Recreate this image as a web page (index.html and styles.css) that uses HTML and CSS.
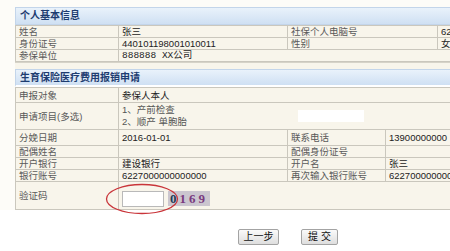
FILE: index.html
```html
<!DOCTYPE html>
<html lang="zh-CN">
  <head>
    <meta charset="UTF-8" />
    <title>生育保险医疗费用报销申请</title>
    <link rel="stylesheet" href="styles.css">
  </head>
  <body>
    <div class="page">
      <div class="form-box">
        <div class="caption">个人基本信息</div>
        <table class="grid">
          <colgroup>
            <col style="width: 103px" />
            <col style="width: 169px" />
            <col style="width: 150px" />
            <col />
          </colgroup>
          <tr>
            <td class="label">姓名</td>
            <td>张三</td>
            <td class="label">社保个人电脑号</td>
            <td>6200000000</td>
          </tr>
          <tr>
            <td class="label">身份证号</td>
            <td>440101198001010011</td>
            <td class="label">性别</td>
            <td>女</td>
          </tr>
          <tr>
            <td class="label">参保单位</td>
            <td colspan="3" class="mono">888888 XX公司</td>
          </tr>
        </table>

        <div class="gap"></div>

        <div class="caption caption-second">生育保险医疗费用报销申请</div>
        <table class="grid">
          <colgroup>
            <col style="width: 103px" />
            <col style="width: 169px" />
            <col style="width: 98px" />
            <col />
          </colgroup>
          <tr class="row-first">
            <td class="label">申报对象</td>
            <td colspan="3">参保人本人</td>
          </tr>
          <tr class="row-items">
            <td class="label">申请项目(多选)</td>
            <td colspan="3">
              <div class="items">
                <div class="item-list">
                  <div>1、产前检查</div>
                  <div>2、顺产 单胞胎</div>
                </div>
                <span class="blank"></span>
              </div>
            </td>
          </tr>
          <tr class="row-date">
            <td class="label">分娩日期</td>
            <td>2016-01-01</td>
            <td class="label">联系电话</td>
            <td>13900000000</td>
          </tr>
          <tr>
            <td class="label">配偶姓名</td>
            <td></td>
            <td class="label">配偶身份证号</td>
            <td></td>
          </tr>
          <tr>
            <td class="label">开户银行</td>
            <td>建设银行</td>
            <td class="label">开户名</td>
            <td>张三</td>
          </tr>
          <tr>
            <td class="label">银行账号</td>
            <td>6227000000000000</td>
            <td class="label">再次输入银行账号</td>
            <td>6227000000000000</td>
          </tr>
          <tr class="row-code">
            <td class="label">验证码</td>
            <td colspan="3">
              <div class="code">
                <input type="text" class="code-input" />
                <span class="captcha"><b class="c0">0</b>169</span>
              </div>
            </td>
          </tr>
        </table>
      </div>

      <div class="actions">
        <button class="btn btn-prev">上一步</button>
        <button class="btn btn-submit">提 交</button>
      </div>

      <!-- 红圈标注 -->
      <svg class="mark" width="80" height="34" viewBox="0 0 80 34">
        <ellipse cx="40" cy="17" rx="35.5" ry="14.5" />
      </svg>
    </div>
  </body>
</html>
```

FILE: styles.css
```css
body {
  margin: 0;
  background: #fdfcf8;
  font-family: "Liberation Sans", "Noto Sans CJK SC", sans-serif;
  font-size: 9.5px;
  color: #222;
  overflow: hidden;
}

.page {
  position: relative;
  width: 546px;
  padding: 7px 0 0 15px;
}

.form-box {
  background: #f8f5eb;
}

.caption {
  height: 16px;
  line-height: 16px;
  padding-left: 4px;
  border: 1px solid #c3d5ea;
  background: linear-gradient(to bottom, #e9f2fb, #cfe0f3);
  font-weight: bold;
  font-size: 10px;
  color: #1d3c70;
}

.caption-second {
  height: 15px;
  line-height: 15px;
  border-bottom: 2px solid #fff;
}

.gap {
  height: 6px;
  border-top: 1px solid #d6d3c8;
}

.grid {
  width: 546px;
  border-collapse: collapse;
  table-layout: fixed;
}

.grid td {
  height: 11px;
  padding: 0 3px;
  line-height: 11px;
  border: 1px solid #cac7bd;
  white-space: nowrap;
  overflow: hidden;
}

.grid td.label {
  color: #5a5a5a;
}

.mono {
  font-family: "Liberation Mono", "Noto Sans CJK SC", monospace;
}

.row-first td {
  height: 14px;
}

.row-items td {
  height: 26px;
}

.items {
  display: flex;
  align-items: center;
}

.item-list {
  width: 176px;
  line-height: 12px;
  color: #555;
}

.blank {
  display: inline-block;
  width: 66px;
  height: 12px;
  background: #fff;
}

.row-date td {
  height: 15px;
}

.row-code td {
  height: 27px;
}

.code {
  display: flex;
  align-items: center;
  gap: 4px;
  padding-top: 6px;
}

.code-input {
  width: 40px;
  height: 14px;
  margin: 0;
  padding: 0;
  border: 1px solid #b9b9b9;
  background: #fff;
}

.captcha {
  display: inline-block;
  height: 15px;
  padding: 0 2px;
  line-height: 15px;
  background: #cbc6cf;
  font-family: "Liberation Serif", serif;
  font-size: 13px;
  font-weight: bold;
  letter-spacing: 3px;
  color: #7a3a7e;
}

.captcha .c0 {
  color: #233c56;
}

.actions {
  display: flex;
  justify-content: center;
  gap: 22px;
  height: 60px;
  margin-left: -15px;
  padding: 19px 0 0 15px;
  background: #fff;
}

.btn {
  height: 16px;
  padding: 0;
  border: 1px solid #a3a3a3;
  border-radius: 2px;
  background: linear-gradient(to bottom, #fafafa, #dedede);
  font-family: "Liberation Sans", "Noto Sans CJK SC", sans-serif;
  font-size: 10px;
  line-height: 14px;
  white-space: nowrap;
  color: #111;
}

.btn-prev {
  width: 41px;
}

.btn-submit {
  width: 37px;
}

.mark {
  position: absolute;
  left: 102px;
  top: 182px;
}

.mark ellipse {
  fill: none;
  stroke: #c9353a;
  stroke-width: 1.3;
}
```
